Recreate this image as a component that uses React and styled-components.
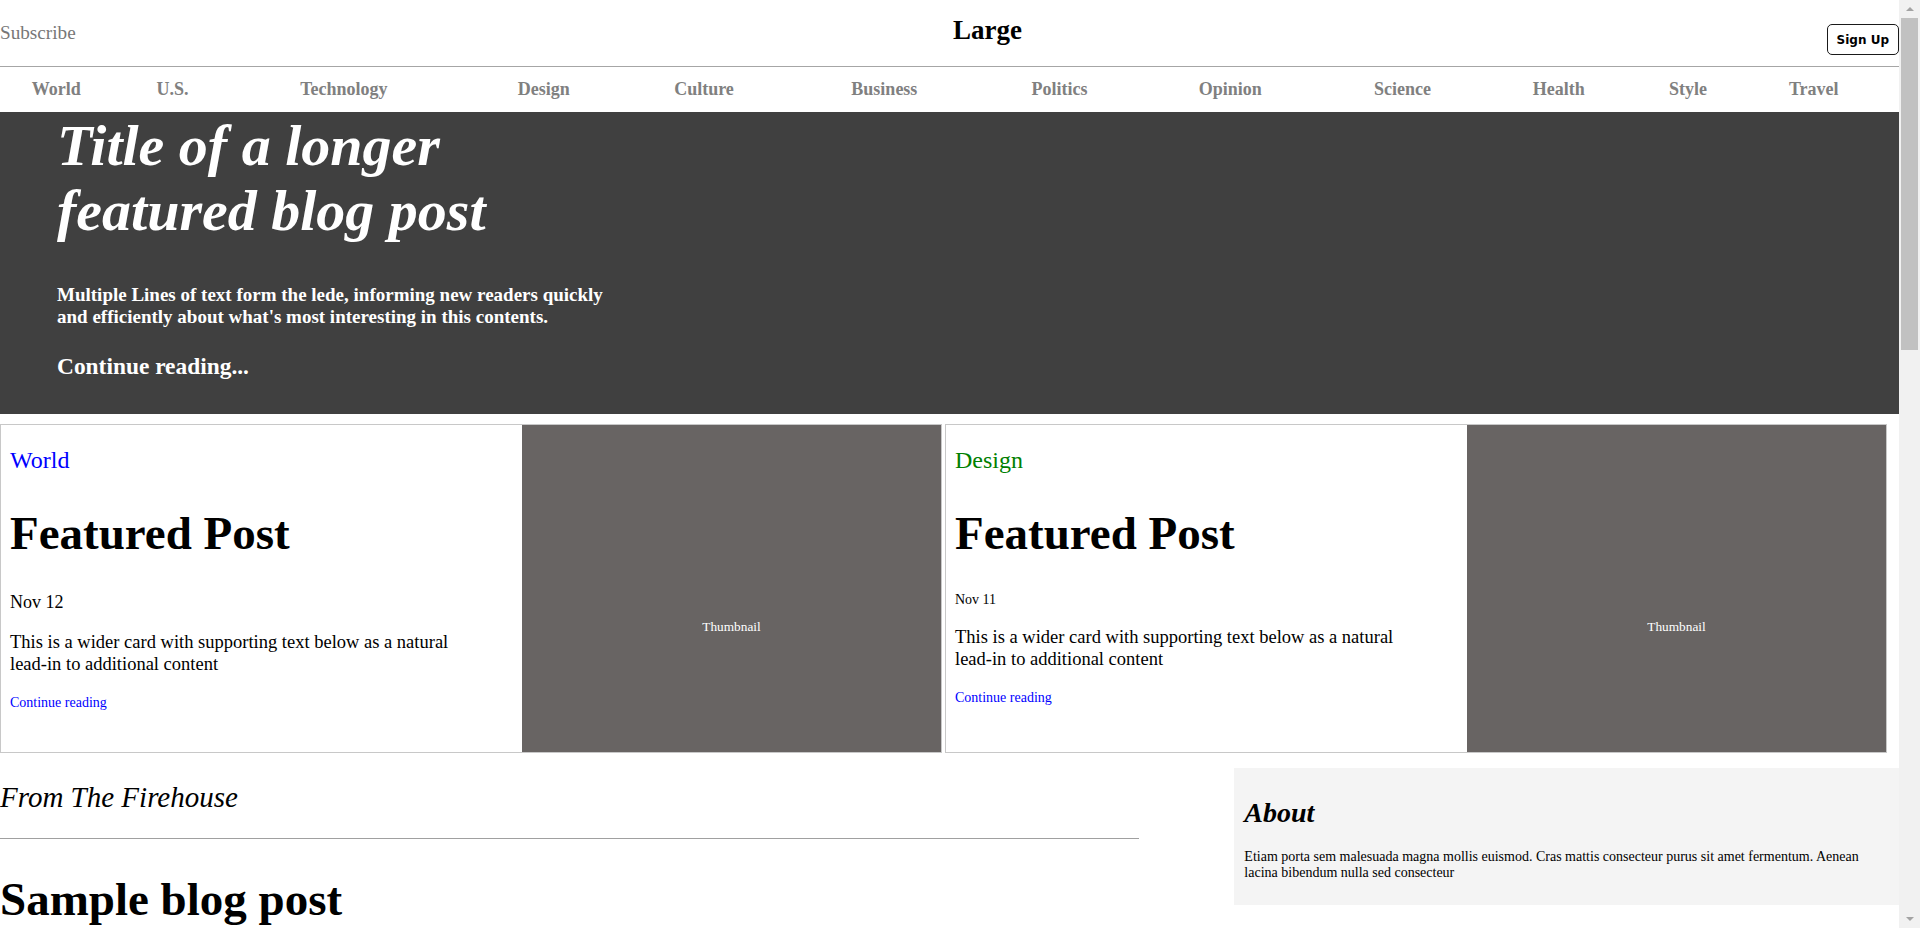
import React from 'react';
import styled, { createGlobalStyle } from 'styled-components';

const GlobalStyle = createGlobalStyle`
    html, body {
        margin: 0;
        padding: 0;
        height: 100%;
        overflow: hidden;
        background: #ffffff;
        color: #000000;
        font-family: "Liberation Serif", "Times New Roman", serif;
    }
    * { box-sizing: border-box; }
`

const Shell = styled.div`
    display: flex;
    height: 100vh;
`

const Viewport = styled.div`
    flex: 1;
    min-width: 0;
    overflow-y: auto;
    scrollbar-width: none;
    &::-webkit-scrollbar { display: none; }
`

const ScrollBar = styled.div`
    display: flex;
    flex-direction: column;
    width: 21px;
    background: #f1f1f1;
`

const ScrollArrow = styled.div`
    display: flex;
    align-items: center;
    justify-content: center;
    height: 18px;

    &::before {
        content: "";
        border-left: 4px solid transparent;
        border-right: 4px solid transparent;
        ${p => p.down
            ? 'border-top: 4px solid #a3a3a3;'
            : 'border-bottom: 4px solid #a3a3a3;'}
    }
`

const ScrollTrack = styled.div`
    flex: 1;
    padding: 0 2px;
`

const ScrollThumb = styled.div`
    height: 332px;
    background: #c1c1c1;
`

const Header = styled.header`
    display: grid;
    grid-template-columns: 953px 1fr auto;
    align-items: start;
    height: 67px;
    border-bottom: 1px solid #a6a6a6;
`

const Subscribe = styled.a`
    margin-top: 22px;
    font-size: 19.2px;
    color: #777777;
    text-decoration: none;
`

const SiteTitle = styled.h1`
    margin: 15px 0 0;
    font-size: 27px;
    font-weight: bold;
`

const SignUp = styled.button`
    margin-top: 24px;
    height: 31px;
    padding: 0 9px;
    background: #ffffff;
    border: 1px solid #1a1a1a;
    border-radius: 5px;
    font-family: "DejaVu Sans", sans-serif;
    font-size: 12px;
    font-weight: bold;
    color: #000000;
`

const NavWrap = styled.div`
    padding: 12px 0;
`

const Nav = styled.nav`
    display: table;
    width: 100%;
    margin-left: -14px;
    table-layout: auto;
`

const NavLink = styled.a`
    display: table-cell;
    text-align: center;
    font-size: 18px;
    font-weight: bold;
    color: #808080;
    text-decoration: none;
    white-space: nowrap;
`

const Hero = styled.section`
    background: #404040;
    color: #ffffff;
    padding: 2px 57px 34px;
`

const HeroTitle = styled.h2`
    margin: 0;
    max-width: 540px;
    font-size: 58px;
    font-style: italic;
    font-weight: bold;
    line-height: 64.5px;
`

const Lede = styled.p`
    margin: 41px 0 25px;
    max-width: 575px;
    font-size: 19px;
    font-weight: bold;
    line-height: 22px;
`

const HeroLink = styled.a`
    display: block;
    font-size: 23.4px;
    font-weight: bold;
    color: #ffffff;
    text-decoration: none;
`

const Cards = styled.div`
    display: grid;
    grid-template-columns: 1fr 1fr;
    gap: 3px;
    margin-top: 10px;
    padding-right: 12px;
`

const Card = styled.article`
    display: grid;
    grid-template-columns: 1fr 419px;
    min-height: 329px;
    border: 1px solid #c8c8c8;
`

const CardBody = styled.div`
    padding: 0 50px 0 9px;
`

const Category = styled.h3`
    margin: 21.5px 0 32px;
    font-size: 24px;
    font-weight: normal;
    color: ${p => p.color};
`

const CardTitle = styled.h2`
    margin: 0 0 32.5px;
    font-size: 47px;
    font-weight: bold;
`

const CardDate = styled.div`
    margin-bottom: 17.5px;
    font-size: ${p => p.size}px;
`

const CardText = styled.p`
    margin: 0 0 18px;
    font-size: 18.5px;
    line-height: 22px;
`

const SmallLink = styled.a`
    font-size: 14px;
    color: #0000ff;
    text-decoration: none;
`

const Thumb = styled.div`
    display: flex;
    align-items: center;
    justify-content: center;
    padding-top: 76px;
    background: #686463;
    color: #ffffff;
    font-size: 13.33px;
`

const Lower = styled.div`
    display: grid;
    grid-template-columns: 12fr 7fr;
    column-gap: 95px;
    align-items: start;
    margin-top: 15px;
`

const Main = styled.main``

const SectionTitle = styled.h3`
    margin: 12.5px 0 24px;
    font-size: 29px;
    font-style: italic;
    font-weight: normal;
`

const Rule = styled.hr`
    margin: 0 0 33px;
    border: 0;
    border-top: 1px solid #a0a0a0;
`

const PostTitle = styled.h2`
    margin: 0 0 6px;
    font-size: 47px;
    font-weight: bold;
`

const PostMeta = styled.p`
    margin: 0 0 28px;
    font-size: 16px;
    color: #777777;

    a { color: #0000ff; text-decoration: none; }
`

const PostText = styled.p`
    margin: 0 0 18px;
    font-size: 18px;
    line-height: 27px;
`

const PostHeading = styled.h3`
    margin: 34px 0 14px;
    font-size: 29px;
    font-weight: bold;
`

const Quote = styled.blockquote`
    margin: 0 0 18px;
    padding-left: 18px;
    border-left: 4px solid #cccccc;
    font-size: 18px;
    font-style: italic;
`

const List = styled.ul`
    margin: 0 0 18px;
    padding-left: 32px;
    font-size: 18px;
    line-height: 27px;
`

const Pager = styled.div`
    display: flex;
    gap: 10px;
    margin: 40px 0 60px;

    a {
        padding: 8px 16px;
        border: 1px solid #1a1a1a;
        border-radius: 20px;
        font-size: 14px;
        color: #000000;
        text-decoration: none;
    }
    a.off { color: #999999; border-color: #cccccc; }
`

const Aside = styled.aside``

const AboutBox = styled.div`
    padding: 0 10px;
    background: #f4f4f4;
    border-top: 1px solid transparent;
    border-bottom: 1px solid transparent;
`

const AsideTitle = styled.h4`
    margin: 28px 0 20px;
    font-size: 28px;
    font-style: italic;
    font-weight: bold;
`

const AsideText = styled.p`
    margin: 0 0 23px;
    font-size: 14px;
`

const AsideBlock = styled.div`
    padding: 0 10px;
`

const AsideList = styled.ol`
    margin: 0;
    padding: 0;
    list-style: none;
    font-size: 16px;
    line-height: 26px;

    a { color: #0000ff; text-decoration: none; }
`

const Footer = styled.footer`
    padding: 40px 0;
    background: #f4f4f4;
    border-top: 1px solid #e0e0e0;
    text-align: center;
    font-size: 15px;
    color: #777777;

    p { margin: 0 0 8px; }
    a { color: #0000ff; text-decoration: none; }
`

const navItems = ['World', 'U.S.', 'Technology', 'Design', 'Culture', 'Business', 'Politics', 'Opinion', 'Science', 'Health', 'Style', 'Travel'];

const cards = [
    { category: 'World', color: '#0000ff', date: 'Nov 12', dateSize: 18 },
    { category: 'Design', color: '#008000', date: 'Nov 11', dateSize: 14 },
];

const archives = ['March 2014', 'February 2014', 'January 2014', 'December 2013', 'November 2013', 'October 2013', 'September 2013', 'August 2013', 'July 2013', 'June 2013', 'May 2013', 'April 2013'];

const App = () => {
    return(
        <Shell>
            <GlobalStyle />
            <Viewport>
                <Header>
                    <Subscribe href="#">Subscribe</Subscribe>
                    <SiteTitle>Large</SiteTitle>
                    <SignUp>Sign Up</SignUp>
                </Header>
                <NavWrap>
                    <Nav>
                        {navItems.map(item => <NavLink key={item} href="#">{item}</NavLink>)}
                    </Nav>
                </NavWrap>
                <Hero>
                    <HeroTitle>Title of a longer featured blog post</HeroTitle>
                    <Lede>Multiple Lines of text form the lede, informing new readers quickly and efficiently about what's most interesting in this contents.</Lede>
                    <HeroLink href="#">Continue reading...</HeroLink>
                </Hero>
                <Cards>
                    {cards.map(card => (
                        <Card key={card.category}>
                            <CardBody>
                                <Category color={card.color}>{card.category}</Category>
                                <CardTitle>Featured Post</CardTitle>
                                <CardDate size={card.dateSize}>{card.date}</CardDate>
                                <CardText>This is a wider card with supporting text below as a natural lead-in to additional content</CardText>
                                <SmallLink href="#">Continue reading</SmallLink>
                            </CardBody>
                            <Thumb>Thumbnail</Thumb>
                        </Card>
                    ))}
                </Cards>
                <Lower>
                    <Main>
                        <SectionTitle>From The Firehouse</SectionTitle>
                        <Rule />
                        <PostTitle>Sample blog post</PostTitle>
                        <PostMeta>January 1, 2014 by <a href="#">Mark</a></PostMeta>
                        <PostText>This blog post shows a few different types of content that's supported and styled with the page. Basic typography, images, and code are all supported.</PostText>
                        <Rule />
                        <PostText>Cum sociis natoque penatibus et magnis dis parturient montes, nascetur ridiculus mus. Aenean eu leo quam. Pellentesque ornare sem lacinia quam venenatis vestibulum. Sed posuere consectetur est at lobortis. Cras mattis consectetur purus sit amet fermentum.</PostText>
                        <Quote>Curabitur blandit tempus porttitor. Nullam quis risus eget urna mollis ornare vel eu leo. Nullam id dolor id nibh ultricies vehicula ut id elit.</Quote>
                        <PostText>Etiam porta sem malesuada magna mollis euismod. Cras mattis consectetur purus sit amet fermentum. Aenean lacinia bibendum nulla sed consectetur.</PostText>
                        <PostHeading>Heading</PostHeading>
                        <PostText>Vivamus sagittis lacus vel augue laoreet rutrum faucibus dolor auctor. Duis mollis, est non commodo luctus, nisi erat porttitor ligula, eget lacinia odio sem nec elit. Morbi leo risus, porta ac consectetur ac, vestibulum at eros.</PostText>
                        <PostHeading>Sub-heading</PostHeading>
                        <PostText>Cum sociis natoque penatibus et magnis dis parturient montes, nascetur ridiculus mus.</PostText>
                        <PostText>Aenean lacinia bibendum nulla sed consectetur. Etiam porta sem malesuada magna mollis euismod. Fusce dapibus, tellus ac cursus commodo, tortor mauris condimentum nibh, ut fermentum massa justo sit amet risus.</PostText>
                        <List>
                            <li>Praesent commodo cursus magna, vel scelerisque nisl consectetur et.</li>
                            <li>Donec id elit non mi porta gravida at eget metus.</li>
                            <li>Nulla vitae elit libero, a pharetra augue.</li>
                        </List>
                        <PostText>Donec ullamcorper nulla non metus auctor fringilla. Nulla vitae elit libero, a pharetra augue.</PostText>

                        <PostTitle>Another blog post</PostTitle>
                        <PostMeta>December 23, 2013 by <a href="#">Jacob</a></PostMeta>
                        <PostText>Cum sociis natoque penatibus et magnis dis parturient montes, nascetur ridiculus mus. Aenean eu leo quam. Pellentesque ornare sem lacinia quam venenatis vestibulum. Sed posuere consectetur est at lobortis. Cras mattis consectetur purus sit amet fermentum.</PostText>
                        <Quote>Curabitur blandit tempus porttitor. Nullam quis risus eget urna mollis ornare vel eu leo. Nullam id dolor id nibh ultricies vehicula ut id elit.</Quote>
                        <PostText>Etiam porta sem malesuada magna mollis euismod. Cras mattis consectetur purus sit amet fermentum. Aenean lacinia bibendum nulla sed consectetur.</PostText>

                        <Pager>
                            <a href="#">Older</a>
                            <a href="#" className="off">Newer</a>
                        </Pager>
                    </Main>
                    <Aside>
                        <AboutBox>
                            <AsideTitle>About</AsideTitle>
                            <AsideText>Etiam porta sem malesuada magna mollis euismod. Cras mattis consecteur purus sit amet fermentum. Aenean lacina bibendum nulla sed consecteur</AsideText>
                        </AboutBox>
                        <AsideBlock>
                            <AsideTitle>Archives</AsideTitle>
                            <AsideList>
                                {archives.map(month => <li key={month}><a href="#">{month}</a></li>)}
                            </AsideList>
                        </AsideBlock>
                        <AsideBlock>
                            <AsideTitle>Elsewhere</AsideTitle>
                            <AsideList>
                                <li><a href="#">GitHub</a></li>
                                <li><a href="#">Twitter</a></li>
                                <li><a href="#">Facebook</a></li>
                            </AsideList>
                        </AsideBlock>
                    </Aside>
                </Lower>
                <Footer>
                    <p>Blog template built for the Large magazine.</p>
                    <p><a href="#">Back to top</a></p>
                </Footer>
            </Viewport>
            <ScrollBar>
                <ScrollArrow />
                <ScrollTrack>
                    <ScrollThumb />
                </ScrollTrack>
                <ScrollArrow down />
            </ScrollBar>
        </Shell>
    )
}

export default App;
